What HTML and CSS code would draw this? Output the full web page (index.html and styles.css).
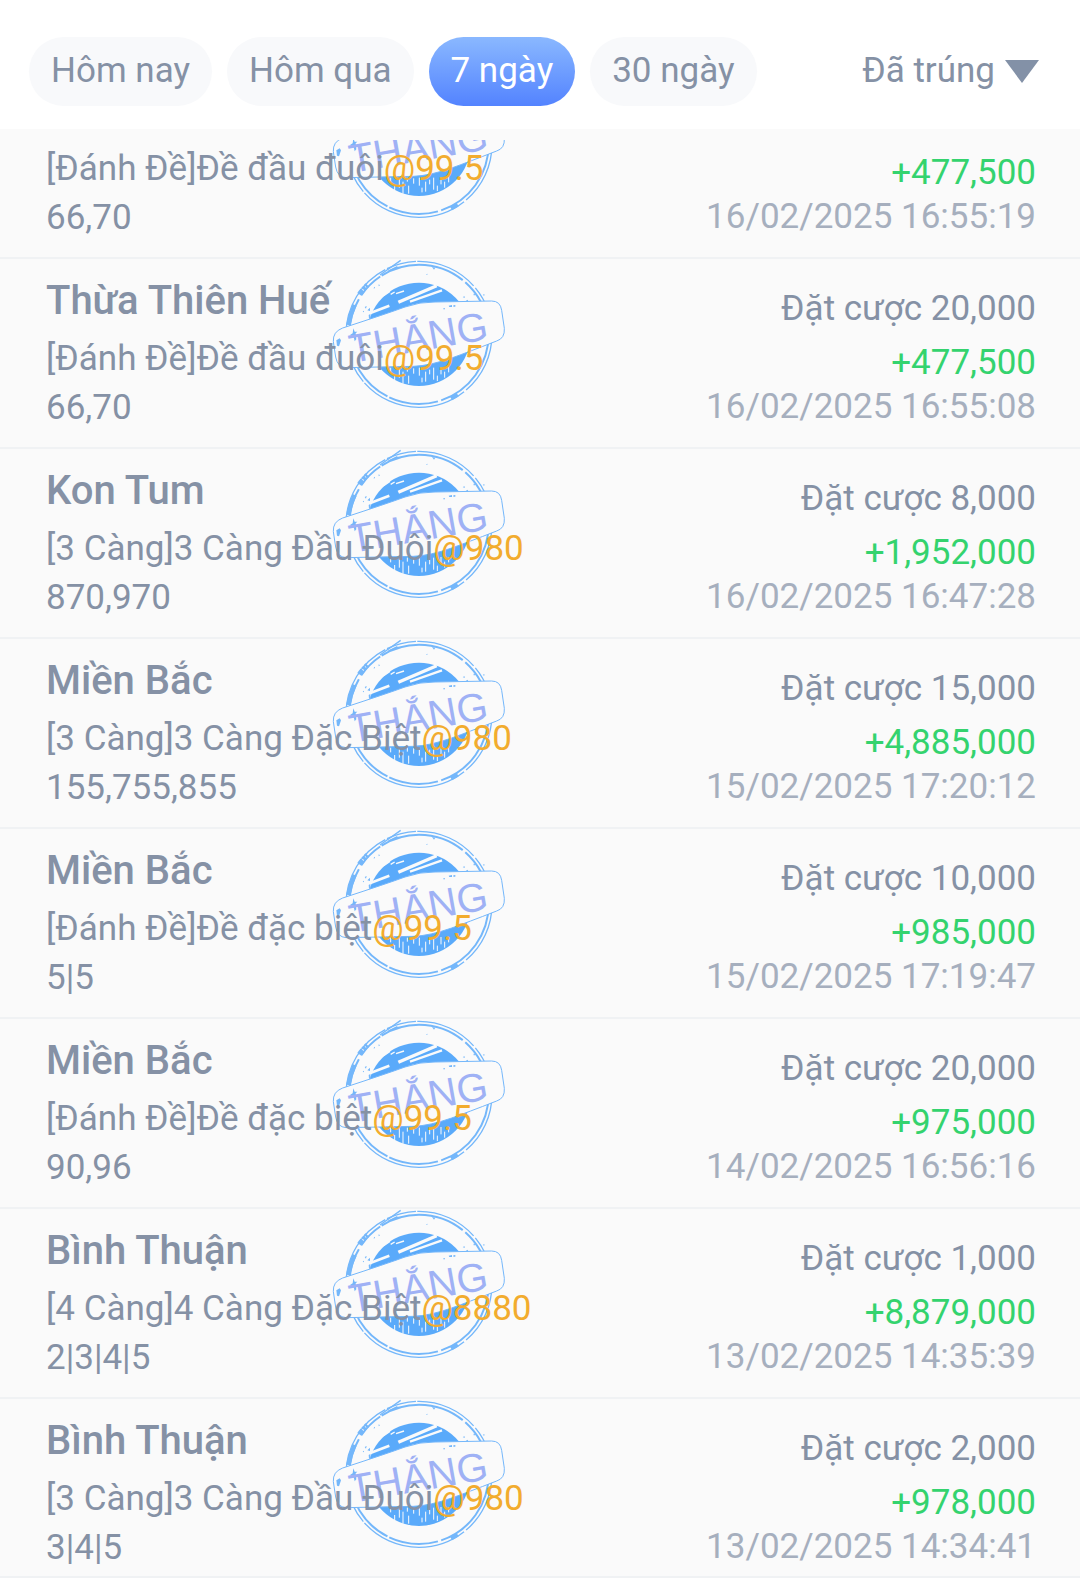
FILE: index.html
```html
<!DOCTYPE html>
<html lang="vi">
<head>
    <meta charset="UTF-8">
    <meta name="viewport" content="width=device-width, initial-scale=1.0">
    <title>Lịch sử cược</title>
    <link rel="stylesheet" href="styles.css">
</head>
<body>

    <!-- Winning stamp, reused by every row -->
    <svg class="defs" aria-hidden="true">
        <symbol id="stamp" viewBox="36 24 522 450">
            <g fill="none" stroke="#74b7fa">
                <circle cx="297" cy="250" r="219" stroke-width="4" stroke-dasharray="190 8 330 5 120 12 260 6 90 4"/>
                <circle cx="297" cy="250" r="209" stroke-width="6" stroke-dasharray="260 10 150 6 340 14 80 5"/>
                <path d="M85 222A214 214 0 0 1 104 162" stroke-width="13"/>
                <path d="M118 130A214 214 0 0 1 142 102" stroke-width="15" stroke-dasharray="16 3 9 2"/>
                <path d="M180 72L242 28M205 60L232 47" stroke-width="4"/>
                <path d="M393 442l20-11" stroke-width="13"/>
            </g>
            <circle cx="297" cy="250" r="155" fill="#5aaafa"/>
            <g stroke="#fafafa" fill="none">
                <path d="M235 154L350 104" stroke-width="10"/>
                <path d="M270 152L366 118" stroke-width="7"/>
                <path d="M145 188L208 164" stroke-width="8"/>
                <path d="M192 133l18-12M212 130l12-7M228 128l24-8" stroke-width="4"/>
                <path d="M212 350v14M224 372v18M238 352v28M249 362v36M262 350v12M266 374v24M281 352v16M298 350v24M306 380v14M317 362v30M329 356v14M341 350v36M352 374v16M363 348v22M374 362v18M386 348v16" stroke-width="3"/>
            </g>
            <path fill="#fafafa" stroke="#74b7fa" stroke-width="3" d="M68 231Q200 188 255 168Q300 152 345 153L515 150Q541 150 545 178L553 232Q555 262 530 270Q440 305 395 321Q330 344 280 346L78 350Q52 348 47 318L40 272Q38 242 68 231Z"/>
            <g fill="#74b7fa">
                <path d="M49 268l10-6 4 6-6 18-6-2z"/>
                <path d="M100 232l4 10 8 0-5 5 2 18-5 6-3-14-11-5 8-5z"/>
                <path d="M134 168l6-3-2 8zM142 178l8-8 0 10zM146 192l5-3 1 12-5 3zM428 138l6-2v5zM437 150l6-4 2 6zM336 48l10 2-4 6zM460 128l6 2-4 4zM488 132l5-3v5zM318 70l4-2v4zM176 100l4 3-4 3zM128 182l4-3v5z"/>
                <path d="M386 164l10-2v6h-8zM400 163l6-1v5h-6zM370 172h5v3h-5zM160 112l5-5v5z"/>
            </g>
            <text class="stamp-text" transform="rotate(-10 300 300)" x="302" y="300" text-anchor="middle">THẮNG</text>
        </symbol>
    </svg>

    <header class="filters">
        <nav class="tabs">
            <button class="tab">Hôm nay</button>
            <button class="tab">Hôm qua</button>
            <button class="tab active">7 ngày</button>
            <button class="tab">30 ngày</button>
        </nav>
        <button class="status">Đã trúng <svg class="caret" viewBox="0 0 34 23"><path d="M0 0h34L17 23z"/></svg></button>
    </header>

    <main class="history">
        <ul class="bets" id="bets">
            <li class="bet">
                <svg class="stamp"><use href="#stamp"/></svg>
                <div class="info">
                    <h2>Thừa Thiên Huế</h2>
                    <p>[Đánh Đề]Đề đầu đuôi<span class="odds">@99.5</span></p>
                    <p>66,70</p>
                </div>
                <div class="result">
                    <p class="stake">Đặt cược 20,000</p>
                    <p class="win">+477,500</p>
                    <time>16/02/2025 16:55:19</time>
                </div>
            </li>
            <li class="bet">
                <svg class="stamp"><use href="#stamp"/></svg>
                <div class="info">
                    <h2>Thừa Thiên Huế</h2>
                    <p>[Đánh Đề]Đề đầu đuôi<span class="odds">@99.5</span></p>
                    <p>66,70</p>
                </div>
                <div class="result">
                    <p class="stake">Đặt cược 20,000</p>
                    <p class="win">+477,500</p>
                    <time>16/02/2025 16:55:08</time>
                </div>
            </li>
            <li class="bet">
                <svg class="stamp"><use href="#stamp"/></svg>
                <div class="info">
                    <h2>Kon Tum</h2>
                    <p>[3 Càng]3 Càng Đầu Đuôi<span class="odds">@980</span></p>
                    <p>870,970</p>
                </div>
                <div class="result">
                    <p class="stake">Đặt cược 8,000</p>
                    <p class="win">+1,952,000</p>
                    <time>16/02/2025 16:47:28</time>
                </div>
            </li>
            <li class="bet">
                <svg class="stamp"><use href="#stamp"/></svg>
                <div class="info">
                    <h2>Miền Bắc</h2>
                    <p>[3 Càng]3 Càng Đặc Biệt<span class="odds">@980</span></p>
                    <p>155,755,855</p>
                </div>
                <div class="result">
                    <p class="stake">Đặt cược 15,000</p>
                    <p class="win">+4,885,000</p>
                    <time>15/02/2025 17:20:12</time>
                </div>
            </li>
            <li class="bet">
                <svg class="stamp"><use href="#stamp"/></svg>
                <div class="info">
                    <h2>Miền Bắc</h2>
                    <p>[Đánh Đề]Đề đặc biệt<span class="odds">@99.5</span></p>
                    <p>5|5</p>
                </div>
                <div class="result">
                    <p class="stake">Đặt cược 10,000</p>
                    <p class="win">+985,000</p>
                    <time>15/02/2025 17:19:47</time>
                </div>
            </li>
            <li class="bet">
                <svg class="stamp"><use href="#stamp"/></svg>
                <div class="info">
                    <h2>Miền Bắc</h2>
                    <p>[Đánh Đề]Đề đặc biệt<span class="odds">@99.5</span></p>
                    <p>90,96</p>
                </div>
                <div class="result">
                    <p class="stake">Đặt cược 20,000</p>
                    <p class="win">+975,000</p>
                    <time>14/02/2025 16:56:16</time>
                </div>
            </li>
            <li class="bet">
                <svg class="stamp"><use href="#stamp"/></svg>
                <div class="info">
                    <h2>Bình Thuận</h2>
                    <p>[4 Càng]4 Càng Đặc Biệt<span class="odds">@8880</span></p>
                    <p>2|3|4|5</p>
                </div>
                <div class="result">
                    <p class="stake">Đặt cược 1,000</p>
                    <p class="win">+8,879,000</p>
                    <time>13/02/2025 14:35:39</time>
                </div>
            </li>
            <li class="bet">
                <svg class="stamp"><use href="#stamp"/></svg>
                <div class="info">
                    <h2>Bình Thuận</h2>
                    <p>[3 Càng]3 Càng Đầu Đuôi<span class="odds">@980</span></p>
                    <p>3|4|5</p>
                </div>
                <div class="result">
                    <p class="stake">Đặt cược 2,000</p>
                    <p class="win">+978,000</p>
                    <time>13/02/2025 14:34:41</time>
                </div>
            </li>
        </ul>
    </main>

    <script>
        document.getElementById("bets").scrollTop = 71;
    </script>

</body>
</html>
```
FILE: styles.css
```css
:root {
    --text-color: #8591a5;
    --muted-color: #a6afbe;
    --list-bg: #fafafa;
    --line-color: #f0f2f4;
    --odds-color: #f2ac2e;
    --win-color: #34d36e;
}

* {
    box-sizing: border-box;
}

body {
    display: flex;
    flex-direction: column;
    height: 100vh;
    margin: 0;
    padding-bottom: 14px;
    font-family: Roboto, sans-serif;
    font-size: 35px;
    color: var(--text-color);
    background-color: #fff;
}

h2, p, ul {
    margin: 0;
    padding: 0;
}

button {
    border: none;
    font: inherit;
    color: inherit;
    cursor: pointer;
}

.defs {
    position: absolute;
    width: 0;
    height: 0;
}

/* Filter bar */
.filters {
    display: flex;
    justify-content: space-between;
    align-items: center;
    padding: 37px 41px 23px 29px;
}

.tabs {
    display: flex;
    gap: 15px;
}

.tab {
    height: 69px;
    padding: 0 22px 2px;
    border-radius: 35px;
    background-color: #f8f9fb;
}

.tab.active {
    color: #fff;
    background-image: linear-gradient(#8ab8ff, #5383ff);
}

.status {
    display: flex;
    align-items: center;
    gap: 10px;
    padding: 0 0 2px;
    background: none;
}

.caret {
    width: 34px;
    height: 23px;
    margin-top: 2px;
    fill: #8391a7;
}

/* Bet list */
.history {
    display: flex;
    flex: 1;
    min-height: 0;
    padding-top: 11px;
    background-color: var(--list-bg);
    border-bottom: 2px solid var(--line-color);
}

.bets {
    flex: 1;
    overflow-y: auto;
    scrollbar-width: none;
    list-style: none;
}

.bet {
    position: relative;
    display: flex;
    justify-content: space-between;
    padding: 14px 44px 15px 46px;
    border-bottom: 2px solid var(--line-color);
}

.info, .result {
    position: relative;
    line-height: 49px;
}

.info h2 {
    margin-bottom: 5px;
    font-size: 40px;
    font-weight: 500;
    line-height: 56px;
}

.odds {
    color: var(--odds-color);
}

.result {
    padding-top: 14px;
    line-height: 44px;
    text-align: right;
}

.stake {
    margin-bottom: 10px;
}

.win {
    color: var(--win-color);
}

.result time {
    display: block;
    color: var(--muted-color);
}

.stamp {
    position: absolute;
    top: 0;
    left: 332px;
    width: 174px;
    height: 150px;
}

.stamp-text {
    font-family: "Liberation Sans", sans-serif;
    font-size: 120px;
    fill: #9fb1f5;
}
```
